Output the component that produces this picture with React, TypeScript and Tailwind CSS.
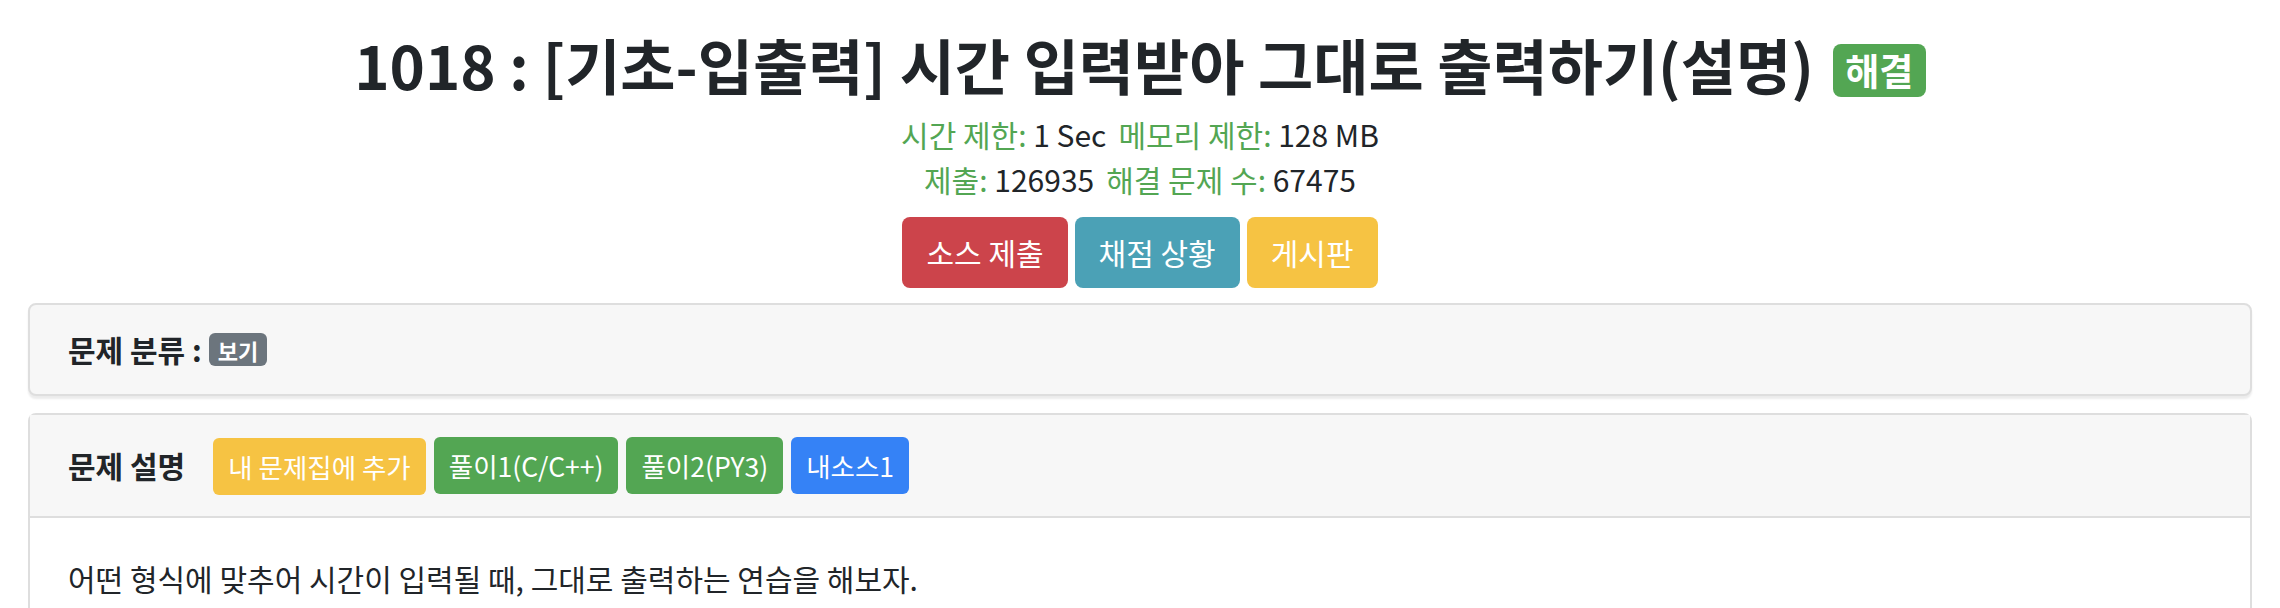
import React from 'react'

const stats = [
  [
    ['시간 제한:', '1 Sec'],
    ['메모리 제한:', '128 MB'],
  ],
  [
    ['제출:', '126935'],
    ['해결 문제 수:', '67475'],
  ],
]

const mainButtons = [
  { label: '소스 제출', className: 'bg-[#cc444b]' },
  { label: '채점 상황', className: 'bg-[#4ba1b6]' },
  { label: '게시판', className: 'bg-[#f6c343]' },
]

const smallButtons = [
  { label: '내 문제집에 추가', className: 'bg-[#f6c343] mt-[2px]' },
  { label: '풀이1(C/C++)', className: 'bg-[#53a653]' },
  { label: '풀이2(PY3)', className: 'bg-[#53a653]' },
  { label: '내소스1', className: 'bg-[#3582f6]' },
]

export default function App() {
  return (
    <div className="min-h-screen bg-white font-['Noto_Sans_CJK_KR','Noto_Sans',sans-serif] text-[#212529]">
      {/* header */}
      <div className="pt-[28px] text-center">
        <h1 className="flex items-center justify-center gap-[19px] text-[60px] font-bold leading-[72px]">
          <span>1018 : [기초-입출력] 시간 입력받아 그대로 출력하기(설명)</span>
          <span className="mt-[12px] flex h-[53px] w-[93px] items-center justify-center rounded-[8px] bg-[#53a653] text-[37px] font-bold leading-none text-white">
            해결
          </span>
        </h1>
        <div className="mt-[12px] text-[30px] leading-[45px]">
          {stats.map((line, i) => (
            <div key={i} className="flex justify-center gap-[12px]">
              {line.map(([label, value]) => (
                <span key={label}>
                  <span className="text-[#53a653]">{label}</span> {value}
                </span>
              ))}
            </div>
          ))}
        </div>
        <div className="mt-[15px] flex justify-center gap-[7px]">
          {mainButtons.map((b) => (
            <button
              key={b.label}
              className={`h-[71px] rounded-[8px] px-[24px] text-[30px] leading-[45px] text-white ${b.className}`}
            >
              {b.label}
            </button>
          ))}
        </div>
      </div>

      {/* cards */}
      <div className="mt-[15px] flex flex-col gap-[17px] px-[28px]">
        <div className="rounded-[8px] border-2 border-[#dedede] bg-[#f7f7f7] px-[38px] py-[22px] shadow-[0_3px_2px_rgba(0,0,0,0.08)]">
          <div className="flex items-center gap-[7px] text-[30px] font-bold leading-[45px]">
            <span>문제 분류 :</span>
            <span className="flex h-[33px] items-center rounded-[6px] bg-[#6c757d] px-[9px] text-[22px] font-bold leading-none text-white">
              보기
            </span>
          </div>
        </div>

        <div className="rounded-t-[8px] border-2 border-b-0 border-[#dedede]">
          <div className="flex items-center gap-[8px] border-b-2 border-[#dedede] bg-[#f7f7f7] px-[38px] py-[21px]">
            <span className="mr-[20px] text-[30px] font-bold">문제 설명</span>
            {smallButtons.map((b) => (
              <button
                key={b.label}
                className={`h-[57px] rounded-[6px] px-[15px] text-[26.5px] leading-[39px] text-white ${b.className}`}
              >
                {b.label}
              </button>
            ))}
          </div>
          <div className="px-[38px] pt-[38px] pb-[40px] text-[30px] leading-[45px]">
            어떤 형식에 맞추어 시간이 입력될 때, 그대로 출력하는 연습을 해보자.
          </div>
        </div>
      </div>
    </div>
  )
}
